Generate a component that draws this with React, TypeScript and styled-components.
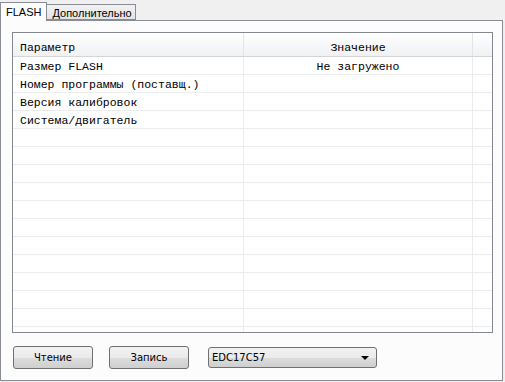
import { createGlobalStyle, styled } from "styled-components";

const GlobalStyle = createGlobalStyle`
  html, body {
    margin: 0;
    padding: 0;
    background: #f0f0f0;
  }
  body {
    font-family: "DejaVu Sans", "Liberation Sans", sans-serif;
    font-size: 10px;
    color: #000;
  }
`;

const Window = styled.div`
  width: 505px;
  height: 382px;
  display: flex;
  flex-direction: column;
  overflow: hidden;
`;

const TabStrip = styled.div`
  height: 20px;
  display: flex;
  align-items: flex-end;
  position: relative;
  z-index: 1;
`;

const Tab = styled.div<{ $active?: boolean }>`
  box-sizing: border-box;
  height: ${(p) => (p.$active ? "19px" : "16px")};
  margin-bottom: ${(p) => (p.$active ? "-1px" : "0")};
  padding: ${(p) => (p.$active ? "2px 5px 0 5px" : "1px 3px 0 5px")};
  border: 1px solid #898c95;
  border-bottom: ${(p) => (p.$active ? "none" : "1px solid #898c95")};
  border-left: ${(p) => (p.$active ? "1px solid #898c95" : "none")};
  background: ${(p) =>
    p.$active ? "#fcfcfc" : "linear-gradient(#f2f2f2, #e3e3e3)"};
  font-family: "Liberation Sans", Arial, sans-serif;
  font-size: 11px;
  line-height: 14px;
  white-space: nowrap;
`;

const Panel = styled.div`
  box-sizing: border-box;
  width: 503px;
  height: 361px;
  border: 1px solid #898c95;
  background: #fcfcfc;
  padding: 11px 9px 11px 11px;
  display: flex;
  flex-direction: column;
`;

const Table = styled.div`
  box-sizing: border-box;
  width: 481px;
  height: 302px;
  border: 1px solid #828790;
  background: #fff;
  overflow: hidden;
  font-family: "Liberation Mono", "DejaVu Sans Mono", monospace;
  font-size: 11.5px;
`;

const Row = styled.div<{ $header?: boolean }>`
  display: grid;
  grid-template-columns: 231px 229px 19px;
  height: ${(p) => (p.$header ? "24px" : "18px")};
  box-sizing: border-box;
  border-bottom: 1px solid ${(p) => (p.$header ? "#d5d5d5" : "#ececec")};
  background: ${(p) =>
    p.$header ? "linear-gradient(#ffffff, #f7f8f9 50%, #f0f1f2)" : "#fff"};
`;

const Cell = styled.div<{ $center?: boolean; $header?: boolean }>`
  box-sizing: border-box;
  border-right: 1px solid ${(p) => (p.$header ? "#e3e4e6" : "#ececec")};
  padding-left: ${(p) => (p.$center ? "0" : "7px")};
  padding-top: 2px;
  text-align: ${(p) => (p.$center ? "center" : "left")};
  line-height: ${(p) => (p.$header ? "26px" : "16px")};
  white-space: nowrap;
  overflow: hidden;
  &:last-child {
    border-right: none;
  }
`;

const Footer = styled.div`
  display: flex;
  align-items: center;
  margin-top: 13px;
  padding-left: 1px;
`;

const Button = styled.button`
  box-sizing: border-box;
  width: 80px;
  height: 23px;
  margin-right: 16px;
  border: 1px solid #707070;
  border-radius: 3px;
  background: linear-gradient(#f2f2f2, #ebebeb 50%, #dddddd 51%, #cfcfcf);
  font-family: "DejaVu Sans", "Liberation Sans", sans-serif;
  font-size: 10px;
  color: #000;
  padding: 0;
`;

const Select = styled.div`
  box-sizing: border-box;
  width: 169px;
  height: 21px;
  margin-left: 3px;
  border: 1px solid #707070;
  border-radius: 3px;
  background: linear-gradient(#f2f2f2, #ebebeb 50%, #dddddd 51%, #cfcfcf);
  display: flex;
  align-items: center;
  justify-content: space-between;
  padding: 0 7px 0 3px;
  font-size: 10px;
`;

const Arrow = styled.span`
  width: 0;
  height: 0;
  border-left: 4px solid transparent;
  border-right: 4px solid transparent;
  border-top: 4px solid #000;
`;

const rows: [string, string][] = [
  ["Размер FLASH", "Не загружено"],
  ["Номер программы (поставщ.)", ""],
  ["Версия калибровок", ""],
  ["Система/двигатель", ""],
];

export default function App() {
  const filled = [...rows];
  while (filled.length < 16) filled.push(["", ""]);

  return (
    <>
      <GlobalStyle />
      <Window>
        <TabStrip>
          <Tab $active>FLASH</Tab>
          <Tab>Дополнительно</Tab>
        </TabStrip>
        <Panel>
          <Table>
            <Row $header>
              <Cell $header>Параметр</Cell>
              <Cell $header $center>
                Значение
              </Cell>
              <Cell $header />
            </Row>
            {filled.map(([name, value], i) => (
              <Row key={i}>
                <Cell>{name}</Cell>
                <Cell $center>{value}</Cell>
                <Cell />
              </Row>
            ))}
          </Table>
          <Footer>
            <Button>Чтение</Button>
            <Button>Запись</Button>
            <Select>
              <span>EDC17C57</span>
              <Arrow />
            </Select>
          </Footer>
        </Panel>
      </Window>
    </>
  );
}
